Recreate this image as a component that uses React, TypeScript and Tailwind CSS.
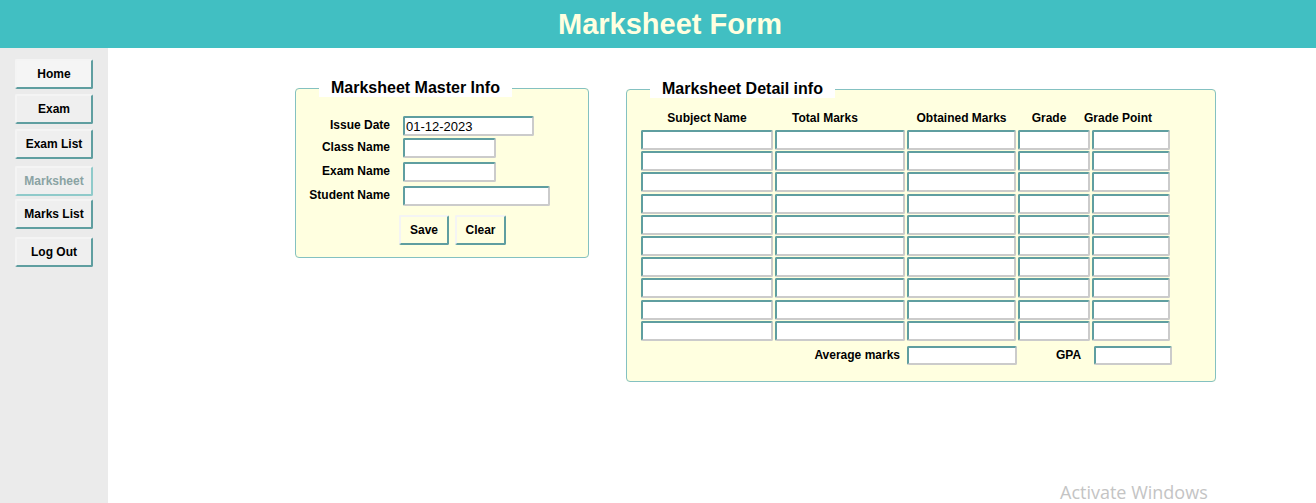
import React from "react";

const navItems = [
  { label: "Home", mt: "mt-[11px]", cls: "bg-[#f5f5f5] text-black border-[#f4f4f4] border-b-[#5f9ea0] border-r-[#5f9ea0]" },
  { label: "Exam", mt: "mt-[5px]", cls: "bg-[#efefef] text-black border-[#f4f4f4] border-b-[#5f9ea0] border-r-[#5f9ea0]" },
  { label: "Exam List", mt: "mt-[5px]", cls: "bg-[#efefef] text-black border-[#f4f4f4] border-b-[#5f9ea0] border-r-[#5f9ea0]" },
  { label: "Marksheet", mt: "mt-[7px]", cls: "bg-[#efefef] text-[#8aa3a3] border-[#f4f4f4] border-b-[#8fcaca] border-r-[#8fcaca]" },
  { label: "Marks List", mt: "mt-[3px]", cls: "bg-[#efefef] text-black border-[#f4f4f4] border-b-[#5f9ea0] border-r-[#5f9ea0]" },
  { label: "Log Out", mt: "mt-[8px]", cls: "bg-[#efefef] text-black border-[#f4f4f4] border-b-[#5f9ea0] border-r-[#5f9ea0]" },
];

const inputCls =
  "block bg-white rounded-[2px] border-2 border-[#cbcbcb] border-t-[#5f9ea0] border-l-[#5f9ea0] outline-none px-[1px] text-[13px] text-black";

const btnBase = "rounded-[2px] border-2 text-[12px] font-bold";
const outsetBtn = `${btnBase} text-black border-[#f4f4f4] border-b-[#5f9ea0] border-r-[#5f9ea0]`;

const masterRows = [
  { label: "Issue Date", w: "w-[131px]", h: "h-[22px]", value: "01-12-2023" },
  { label: "Class Name", w: "w-[93px]", h: "h-[24px]", value: "" },
  { label: "Exam Name", w: "w-[93px]", h: "h-[24px]", value: "" },
  { label: "Student Name", w: "w-[147px]", h: "h-[20px]", value: "" },
];

const headers = [
  { t: "Subject Name", cls: "" },
  { t: "Total Marks", cls: "pr-[30px]" },
  { t: "Obtained Marks", cls: "" },
  { t: "Grade", cls: "pr-[10px]" },
  { t: "Grade Point", cls: "-ml-[26px]" },
];

const cols = "grid grid-cols-[132px_130px_109px_72px_78px] gap-x-[2px]";

const App = () => {
  return (
    <div className="relative h-screen flex flex-col overflow-hidden bg-white font-['Liberation_Sans',Arial,sans-serif] text-black">
      <div className="h-[48px] shrink-0 bg-[#41bfc2] flex items-center justify-center pl-[24px]">
        <h1 className="text-[29px] font-bold text-[#ffffe0] leading-none">Marksheet Form</h1>
      </div>

      <div className="flex flex-1">
        <div className="w-[108px] shrink-0 bg-[#ebebeb] pl-[15px]">
          {navItems.map((n) => (
            <button key={n.label} className={`${btnBase} ${n.mt} ${n.cls} block w-[78px] h-[30px]`}>
              {n.label}
            </button>
          ))}
        </div>

        <div className="flex items-start pl-[187px] pt-[31px] gap-[37px]">
          {/* master */}
          <fieldset className="w-[294px] h-[179px] border border-[#84c1c1] rounded-[4px] bg-[#ffffe0]">
            <legend className="ml-[23px] px-[12px] bg-white text-[16px] leading-[18px] font-bold">
              Marksheet Master Info
            </legend>
            <div className="pt-[19px]">
              {masterRows.map((r) => (
                <div key={r.label} className={`flex items-start ${r.h}`}>
                  <label className="w-[95px] text-right text-[12px] font-bold leading-[18px] pr-[1px]">{r.label}</label>
                  <input className={`${inputCls} ml-[12px] h-[20px] ${r.w}`} defaultValue={r.value} />
                </div>
              ))}
              <div className="flex gap-[6px] ml-[103px] mt-[9px]">
                <button className={`${outsetBtn} w-[50px] h-[30px]`}>Save</button>
                <button className={`${outsetBtn} w-[51px] h-[30px]`}>Clear</button>
              </div>
            </div>
          </fieldset>

          {/* detail */}
          <fieldset className="mt-[1px] w-[590px] h-[302px] border border-[#84c1c1] rounded-[4px] bg-[#ffffe0] pl-[14px]">
            <legend className="ml-[9px] px-[12px] bg-white text-[16px] leading-[18px] font-bold">
              Marksheet Detail info
            </legend>
            <div className={`${cols} mt-[13px] h-[14px]`}>
              {headers.map((h) => (
                <div key={h.t} className={`text-center text-[12px] font-bold leading-[14px] whitespace-nowrap ${h.cls}`}>
                  {h.t}
                </div>
              ))}
            </div>
            <div className={`${cols} gap-y-[1.2px] mt-[5px]`}>
              {Array.from({ length: 50 }).map((_, i) => (
                <input key={i} className={`${inputCls} h-[20px] w-full`} />
              ))}
            </div>
            <div className={`${cols} mt-[5px] items-center`}>
              <div className="col-span-2 text-right pr-[5px] text-[12px] font-bold">Average marks</div>
              <input className={`${inputCls} h-[19px] w-[110px]`} />
              <div className="text-[12px] font-bold pl-[38px]">GPA</div>
              <input className={`${inputCls} h-[19px] w-[78px] ml-[2px]`} />
            </div>
          </fieldset>
        </div>
      </div>

      <div className="absolute left-[1060px] top-[482px] text-[18px] leading-[21px] text-[#c4c4c4] font-['Open_Sans',sans-serif] whitespace-nowrap pointer-events-none">
        Activate Windows
      </div>
    </div>
  );
};

export default App;
